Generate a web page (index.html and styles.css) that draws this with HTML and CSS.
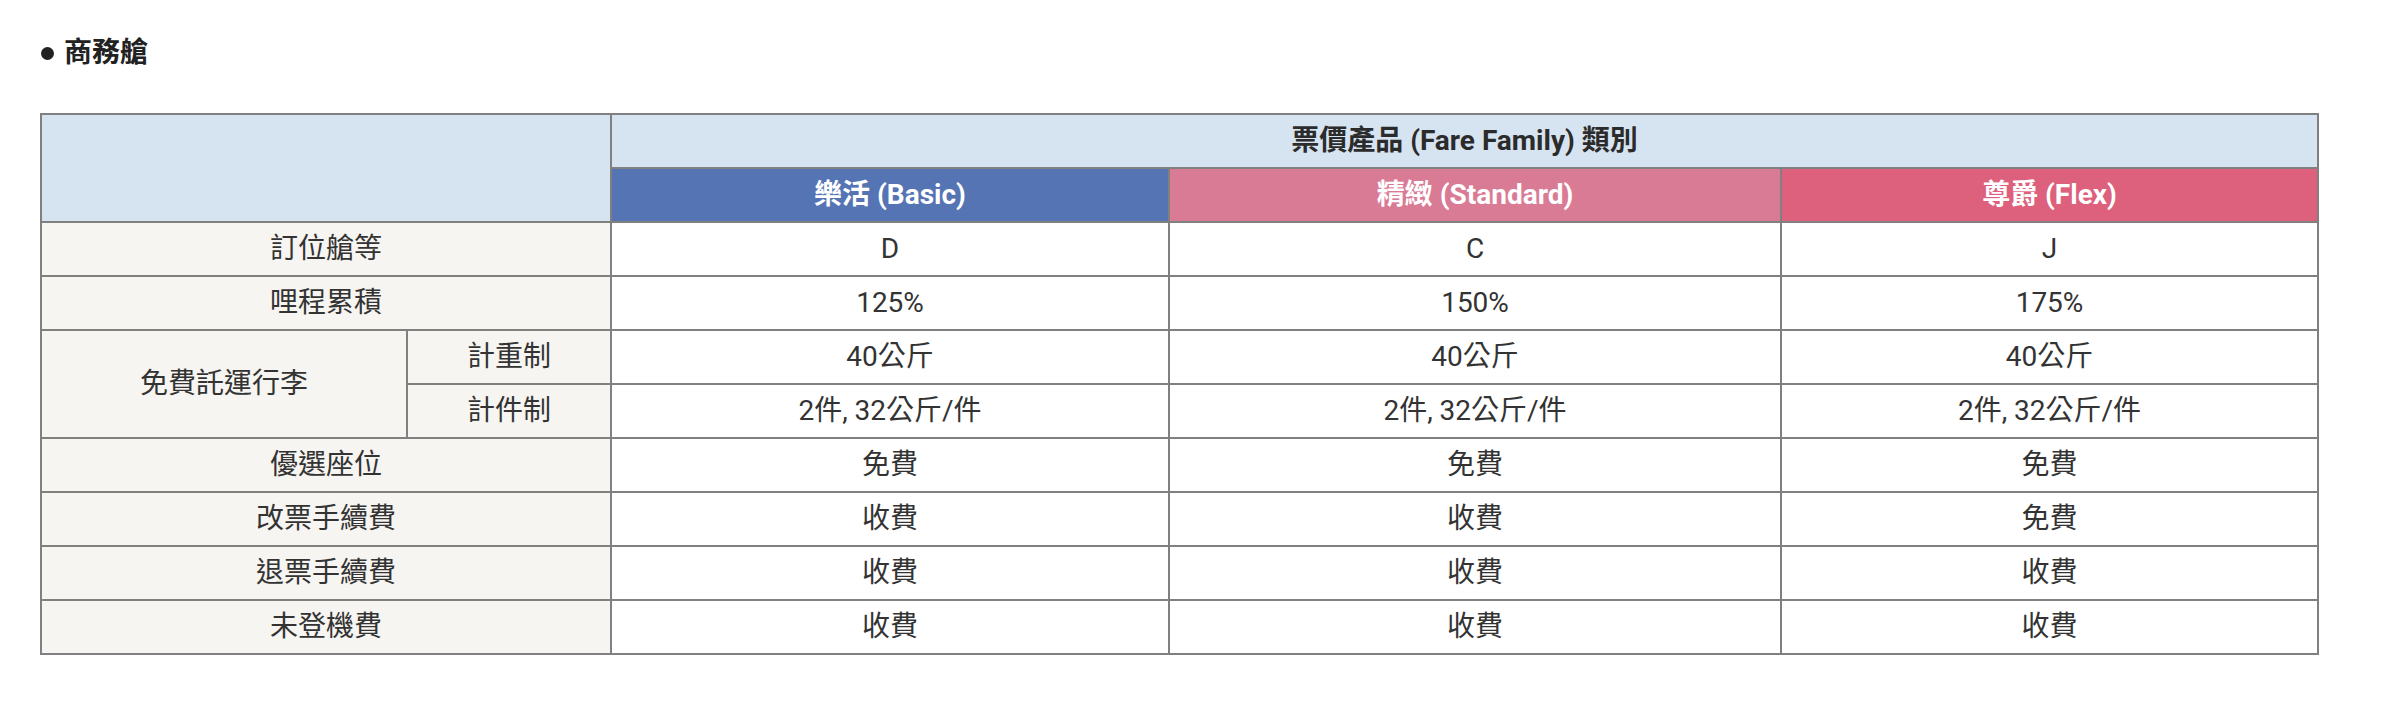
FILE: index.html
```html
<!DOCTYPE html>
<html lang="zh-Hant">
<head>
<meta charset="utf-8">
<title>商務艙</title>
<link rel="stylesheet" href="styles.css">
</head>
<body>
<div class="page">
  <h2 class="section-title">商務艙</h2>
  <table class="fare-table">
    <colgroup>
      <col class="c-label">
      <col class="c-sub">
      <col class="c-basic">
      <col class="c-standard">
      <col class="c-flex">
    </colgroup>
    <thead>
      <tr>
        <th class="corner" colspan="2" rowspan="2"></th>
        <th class="family" colspan="3">票價產品 (Fare Family) 類別</th>
      </tr>
      <tr>
        <th class="basic">樂活 (Basic)</th>
        <th class="standard">精緻 (Standard)</th>
        <th class="flex">尊爵 (Flex)</th>
      </tr>
    </thead>
    <tbody>
      <tr><th class="label" colspan="2">訂位艙等</th><td>D</td><td>C</td><td>J</td></tr>
      <tr><th class="label" colspan="2">哩程累積</th><td>125%</td><td>150%</td><td>175%</td></tr>
      <tr><th class="label" rowspan="2">免費託運行李</th><th class="label">計重制</th><td>40公斤</td><td>40公斤</td><td>40公斤</td></tr>
      <tr><th class="label">計件制</th><td>2件, 32公斤/件</td><td>2件, 32公斤/件</td><td>2件, 32公斤/件</td></tr>
      <tr><th class="label" colspan="2">優選座位</th><td>免費</td><td>免費</td><td>免費</td></tr>
      <tr><th class="label" colspan="2">改票手續費</th><td>收費</td><td>收費</td><td>免費</td></tr>
      <tr><th class="label" colspan="2">退票手續費</th><td>收費</td><td>收費</td><td>收費</td></tr>
      <tr><th class="label" colspan="2">未登機費</th><td>收費</td><td>收費</td><td>收費</td></tr>
    </tbody>
  </table>
</div>
</body>
</html>
```
FILE: styles.css
```css
html, body {
  margin: 0;
  padding: 0;
  background: #ffffff;
}

body {
  font-family: Roboto, "Noto Sans CJK TC", sans-serif;
  color: #333333;
}

.page {
  padding: 33px 0 0 41px;
}

.section-title {
  margin: 0 0 40px 0;
  font-size: 28px;
  line-height: 40px;
  font-weight: bold;
  color: #222222;
  display: flex;
  align-items: center;
  gap: 10px;
}

.section-title::before {
  content: "";
  width: 13px;
  height: 13px;
  border-radius: 50%;
  background: #222222;
}

.fare-table {
  border-collapse: collapse;
  table-layout: fixed;
  width: 2277px;
  margin-left: -1px;
  font-size: 28px;
}

.c-label { width: 366px; }
.c-sub { width: 204px; }
.c-basic { width: 558px; }
.c-standard { width: 612px; }
.c-flex { width: 537px; }

.fare-table tr {
  height: 54px;
}

.fare-table th,
.fare-table td {
  border: 2px solid #808080;
  padding: 0;
  text-align: center;
  vertical-align: middle;
  font-weight: normal;
  line-height: 32px;
}

.fare-table thead th {
  font-weight: bold;
}

.corner,
.family {
  background: #d6e3f0;
  color: #2b2b2b;
}

.basic {
  background: #5574b4;
  color: #ffffff;
}

.standard {
  background: #d97b95;
  color: #ffffff;
}

.flex {
  background: #dd607d;
  color: #ffffff;
}

.fare-table th.label {
  background: #f6f5f1;
  color: #333333;
}

.fare-table td {
  background: #ffffff;
  color: #333333;
}
```
